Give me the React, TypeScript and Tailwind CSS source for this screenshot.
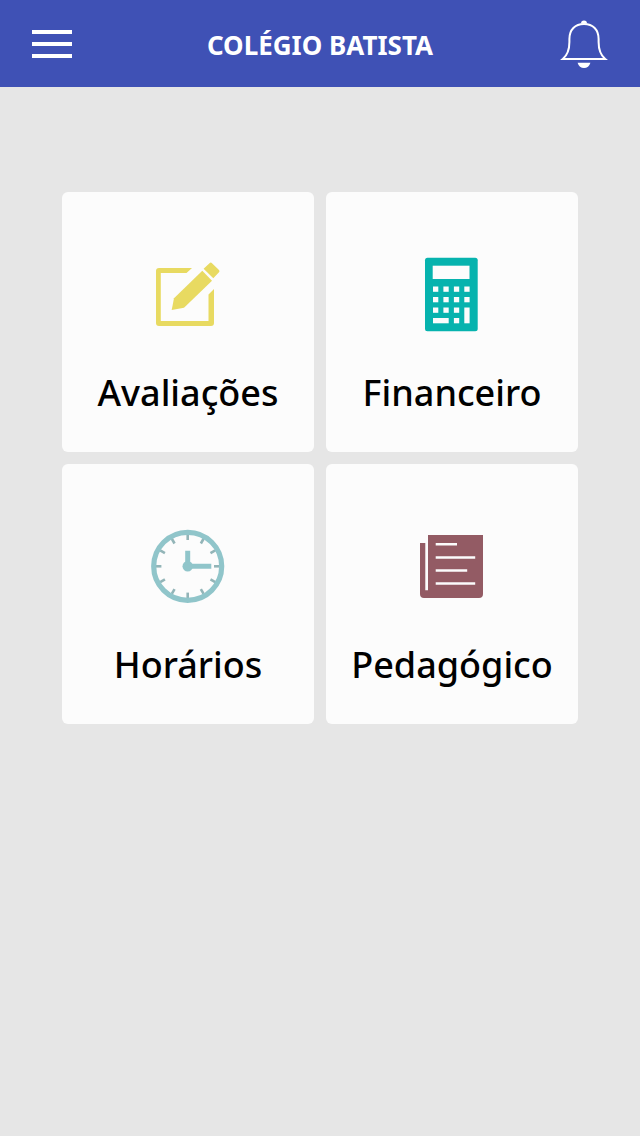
import type { ReactNode } from 'react';

type Tile = {
  label: string;
  href: string;
  icon: ReactNode;
};

const hourMarks = [0, 30, 60, 90, 120, 150, 180, 210, 240, 270, 300, 330];

const BellIcon = () => (
  <svg viewBox="0 0 48 48" className="size-12" aria-hidden="true">
    <path
      d="M2.8 39 C7 35.5 9.4 31 9.4 22 V19 C9.4 9.5 15 4 24 4 C33 4 38.6 9.5 38.6 19 V22 C38.6 31 41 35.5 45.2 39 Z"
      fill="none"
      stroke="#fff"
      strokeWidth="2"
    />
    <path d="M21 3.5 A3 3 0 0 1 27 3.5 Z" fill="#fff" />
    <path d="M17.6 42.7 H30.4 C29.5 46 27 48 24 48 C21 48 18.5 46 17.6 42.7 Z" fill="#fff" />
  </svg>
);

const EditIcon = () => (
  <svg viewBox="0 0 80 80" className="size-20" fill="#e8da61" aria-hidden="true">
    <path d="M44 14 H11 Q8 14 8 17 V69 Q8 72 11 72 H63 Q66 72 66 69 V35 L60.5 40.5 V67 H12.8 V19 H38.5 Z" />
    <path d="M54.3 16.7 L64 26.7 L36 53.7 L23.7 56 L26 44.3 Z" />
    <path d="M55.6 14.8 L61.5 9.2 Q62.8 8 64 9.2 L71 16 Q72 17.2 71 18.3 L65.3 24.2 Z" />
  </svg>
);

const CalculatorIcon = () => (
  <svg viewBox="0 0 80 80" className="size-20" aria-hidden="true">
    <rect x="13" y="3.7" width="52.7" height="73.6" rx="2.5" fill="#06b3ae" />
    <g fill="#fcfcfc">
      <rect x="20.7" y="11.7" width="36.8" height="13.3" />
      {[32.5, 43, 53.5].map((y) =>
        [21, 31.4, 41.9].map((x) => (
          <rect key={`${x}-${y}`} x={x} y={y} width="5.3" height="5.3" />
        ))
      )}
      <rect x="52.3" y="32.5" width="5.3" height="5.3" />
      <rect x="52.3" y="43" width="5.3" height="5.3" />
      <rect x="52.3" y="53.5" width="5.3" height="15.8" />
      <rect x="21" y="64" width="15.7" height="5.3" />
      <rect x="41.9" y="64" width="5.3" height="5.3" />
    </g>
  </svg>
);

const ClockIcon = () => (
  <svg viewBox="0 0 80 80" className="size-20" aria-hidden="true">
    <g stroke="#93b5b8" strokeWidth="2.6">
      {hourMarks.map((deg) => (
        <path key={deg} d="M39.7 8.5 V14" transform={`rotate(${deg} 39.7 40.3)`} />
      ))}
    </g>
    <circle cx="39.7" cy="40.3" r="34" fill="none" stroke="#90c5ca" strokeWidth="5.2" />
    <path d="M39.7 24.7 V40.3 H63.3" fill="none" stroke="#90c5ca" strokeWidth="5" />
    <circle cx="39.7" cy="40.3" r="5.2" fill="#90c5ca" />
  </svg>
);

const BookIcon = () => (
  <svg viewBox="0 0 80 80" className="size-20" aria-hidden="true">
    <path
      d="M16 9 H71 V68 Q71 72 67 72 H12 Q8 72 8 68 V17 H13.3 V64.3 H16 Z"
      fill="#935b64"
    />
    <path
      d="M23.7 18.3 H45 M23.7 31.5 H63.2 M23.7 44.5 H55.2 M23.7 57.5 H63.2"
      stroke="#fcfcfc"
      strokeWidth="2.6"
    />
  </svg>
);

const tiles: Tile[] = [
  { label: 'Avaliações', href: '#avaliacoes', icon: <EditIcon /> },
  { label: 'Financeiro', href: '#financeiro', icon: <CalculatorIcon /> },
  { label: 'Horários', href: '#horarios', icon: <ClockIcon /> },
  { label: 'Pedagógico', href: '#pedagogico', icon: <BookIcon /> },
];

export default function App() {
  return (
    <div className="min-h-screen bg-[#e6e6e6] font-['Noto_Sans',sans-serif]">
      <header className="flex h-[87px] items-center justify-between bg-[#3f51b5] px-8">
        <button type="button" aria-label="Menu" className="flex w-12 flex-col gap-2">
          <span className="h-1 w-10 bg-white" />
          <span className="h-1 w-10 bg-white" />
          <span className="h-1 w-10 bg-white" />
        </button>
        <h1 className="pt-1 text-[26px] font-bold text-white">COLÉGIO BATISTA</h1>
        <button type="button" aria-label="Notificações">
          <BellIcon />
        </button>
      </header>

      <main className="px-[62px] pt-[105px] pb-16">
        <nav className="grid grid-cols-2 gap-3">
          {tiles.map((tile) => (
            <a
              key={tile.label}
              href={tile.href}
              className="flex flex-col items-center gap-8 rounded-md bg-[#fcfcfc] pt-[62px] pb-8 text-black">
              {tile.icon}
              <span className="text-[36px] leading-[54px] font-medium">{tile.label}</span>
            </a>
          ))}
        </nav>
      </main>
    </div>
  );
}
